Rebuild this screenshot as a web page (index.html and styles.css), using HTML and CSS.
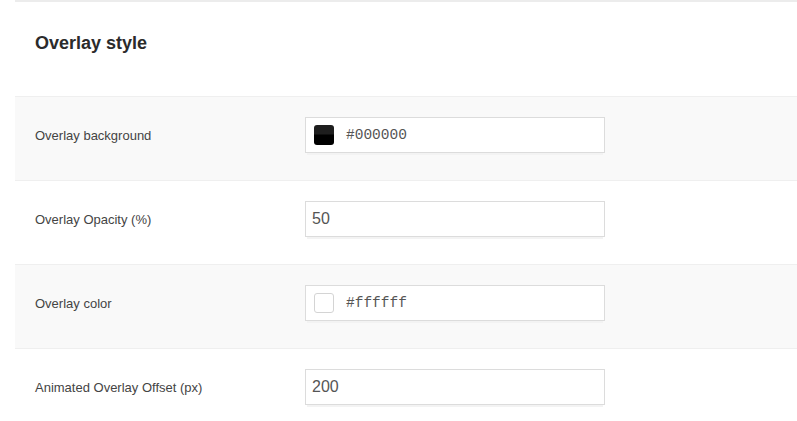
FILE: index.html
```html
<!DOCTYPE html>
<html>
<head>
<meta charset="utf-8">
<link rel="stylesheet" href="styles.css">
</head>
<body>
<div class="panel">
  <div class="panel-head">
    <h2 class="title">Overlay style</h2>
  </div>
  <div class="row alt">
    <div class="label">Overlay background</div>
    <div class="field color-field">
      <span class="swatch swatch-black"></span>
      <span class="code">#000000</span>
    </div>
  </div>
  <div class="row">
    <div class="label">Overlay Opacity (%)</div>
    <div class="field"><span class="num">50</span></div>
  </div>
  <div class="row alt">
    <div class="label">Overlay color</div>
    <div class="field color-field">
      <span class="swatch swatch-white"></span>
      <span class="code">#ffffff</span>
    </div>
  </div>
  <div class="row">
    <div class="label">Animated Overlay Offset (px)</div>
    <div class="field"><span class="num">200</span></div>
  </div>
</div>
</body>
</html>
```

FILE: styles.css
```css
html, body {
  margin: 0;
  padding: 0;
  background: #ffffff;
  font-family: "Liberation Sans", Arial, sans-serif;
  color: #333;
  overflow: hidden;
}
.panel {
  margin-left: 15px;
  border-top: 2px solid #ececec;
}
.panel-head {
  height: 94px;
  padding-left: 20px;
  box-sizing: border-box;
  display: flex;
  align-items: flex-start;
}
.title {
  margin: 29px 0 0 0;
  font-size: 18px;
  font-weight: bold;
  color: #2b2b2b;
  line-height: 24px;
}
.row {
  height: 84px;
  box-sizing: border-box;
  border-top: 1px solid #efefef;
  display: flex;
  align-items: flex-start;
  padding-top: 20px;
  padding-left: 20px;
}
.row.alt {
  background: #f9f9f9;
}
.label {
  width: 270px;
  line-height: 38px;
  font-size: 13px;
  color: #444;
}
.field {
  width: 300px;
  height: 36px;
  box-sizing: border-box;
  border: 1px solid #dcdcdc;
  background: #fff;
  display: flex;
  align-items: center;
  padding-left: 6px;
  box-shadow: 0 4px 0 -2px #f3f3f3;
}
.color-field {
  padding-left: 8px;
}
.swatch {
  width: 20px;
  height: 20px;
  border-radius: 3px;
  box-sizing: border-box;
  margin-right: 12px;
}
.swatch-black {
  background: linear-gradient(#1e1e1e 0, #1e1e1e 45%, #000 50%, #000 100%);
}
.swatch-white {
  background: #fff;
  border: 1px solid #d4d4d4;
}
.code {
  font-family: "Liberation Mono", "DejaVu Sans Mono", monospace;
  font-size: 14.5px;
  color: #555;
}
.num {
  font-size: 16px;
  color: #555;
}
```
